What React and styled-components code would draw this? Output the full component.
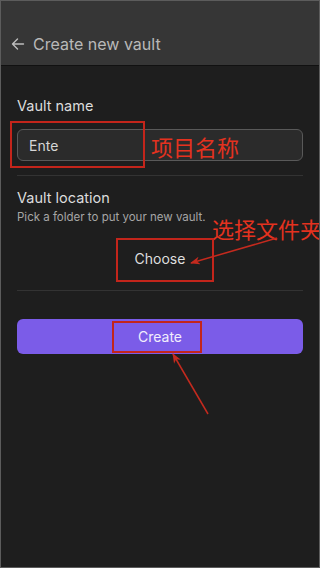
import React from 'react';
import styled, { createGlobalStyle } from 'styled-components';

const GlobalStyle = createGlobalStyle`
  html, body {
    margin: 0;
    padding: 0;
    background: #1e1e1e;
  }
  * {
    box-sizing: border-box;
  }
`;

const Screen = styled.div`
  position: relative;
  width: 320px;
  height: 568px;
  overflow: hidden;
  background: #1e1e1e;
  border: 1px solid #5c5c5c;
  font-family: Inter, "Noto Sans", sans-serif;
`;

const Header = styled.div`
  display: flex;
  align-items: center;
  gap: 8px;
  height: 65px;
  padding: 22px 0 0 10px;
  background: #363636;
  border-bottom: 1px solid #111;
  color: #b9b9b9;
  font-size: 16px;
`;

const Body = styled.div`
  padding: 0 16px;
`;

const Section = styled.div`
  display: flex;
  flex-direction: column;
  padding: ${(p) => p.$pad};
  border-bottom: 1px solid #333;
`;

const Label = styled.div`
  font-size: 14.5px;
  line-height: 18px;
  color: #dcdcdc;
`;

const Desc = styled.div`
  margin-top: 2px;
  font-size: 11.5px;
  line-height: 16px;
  color: #a6a6a6;
`;

const Input = styled.div`
  display: flex;
  align-items: center;
  height: 32px;
  margin-top: 14px;
  padding: 0 11px;
  background: #2b2b2b;
  border: 1px solid #595959;
  border-radius: 6px;
  font-size: 14px;
  color: #d6d6d6;
`;

const GhostButton = styled.div`
  align-self: center;
  margin-top: 17px;
  height: 32px;
  display: flex;
  align-items: center;
  font-size: 14px;
  color: #dedede;
`;

const PrimaryButton = styled.div`
  display: flex;
  align-items: center;
  justify-content: center;
  height: 35px;
  margin-top: 28px;
  background: #7b5ce8;
  border-radius: 6px;
  font-size: 14px;
  color: #f2eefc;
`;

const Mark = styled.div`
  position: absolute;
  left: ${(p) => p.$x}px;
  top: ${(p) => p.$y}px;
  width: ${(p) => p.$w}px;
  height: ${(p) => p.$h}px;
  border: 2px solid #c3251b;
`;

const Note = styled.div`
  position: absolute;
  left: ${(p) => p.$x}px;
  top: ${(p) => p.$y}px;
  font-family: "Noto Sans CJK SC", sans-serif;
  font-size: 22px;
  line-height: 26px;
  color: #e4321f;
  white-space: nowrap;
`;

const Arrows = styled.svg`
  position: absolute;
  left: 0;
  top: 0;
  pointer-events: none;
`;

const BackIcon = () => (
  <svg width="14" height="14" viewBox="0 0 14 14" fill="none" stroke="#bdbdbd" strokeWidth="1.4" strokeLinecap="round" strokeLinejoin="round">
    <path d="M12.5 7H1.5M6.5 2L1.5 7l5 5" />
  </svg>
);

const App = () => (
  <>
    <GlobalStyle />
    <Screen>
      <Header>
        <BackIcon />
        <span>Create new vault</span>
      </Header>
      <Body>
        <Section $pad="31px 0 14px">
          <Label>Vault name</Label>
          <Input>Ente</Input>
        </Section>
        <Section $pad="13px 0 16px">
          <Label>Vault location</Label>
          <Desc>Pick a folder to put your new vault.</Desc>
          <GhostButton>Choose</GhostButton>
        </Section>
        <PrimaryButton>Create</PrimaryButton>
      </Body>

      <Mark $x={9} $y={120} $w={135} $h={47} />
      <Note $x={150} $y={132}>项目名称</Note>
      <Note $x={211} $y={214}>选择文件夹</Note>
      <Mark $x={115} $y={237} $w={98} $h={44} />
      <Mark $x={111} $y={320} $w={90} $h={32} />

      <Arrows width="320" height="568" viewBox="0 0 320 568">
        <defs>
          <marker id="head" markerWidth="10" markerHeight="8" refX="9" refY="4" orient="auto" markerUnits="userSpaceOnUse">
            <path d="M0 0L10 4L0 8L3 4Z" fill="#c42a1e" />
          </marker>
        </defs>
        <line x1="276" y1="237" x2="190" y2="262" stroke="#c42a1e" strokeWidth="1.5" markerEnd="url(#head)" />
        <line x1="207" y1="413" x2="172" y2="353" stroke="#c42a1e" strokeWidth="1.5" markerEnd="url(#head)" />
      </Arrows>
    </Screen>
  </>
);

export default App;
